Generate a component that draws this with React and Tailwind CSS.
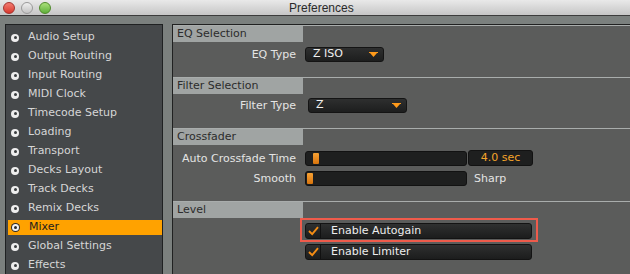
import React from 'react';

const font = "font-['DejaVu_Sans',sans-serif]";

const navItems = [
  'Audio Setup',
  'Output Routing',
  'Input Routing',
  'MIDI Clock',
  'Timecode Setup',
  'Loading',
  'Transport',
  'Decks Layout',
  'Track Decks',
  'Remix Decks',
  'Mixer',
  'Global Settings',
  'Effects',
];

const Bullet = ({ active }) =>
  active ? (
    <span className="flex h-[9px] w-[9px] items-center justify-center rounded-full bg-[#2b2b2b]">
      <span className="flex h-[7px] w-[7px] items-center justify-center rounded-full bg-[#f2f2f2]">
        <span className="h-[3px] w-[3px] rounded-full bg-[#2b2b2b]" />
      </span>
    </span>
  ) : (
    <span className="flex h-[8px] w-[8px] items-center justify-center rounded-full bg-[#eeeeee]">
      <span className="h-[3px] w-[3px] rounded-full bg-[#3a3d3f]" />
    </span>
  );

const SectionHeader = ({ title }) => (
  <div className="border-t border-[#a9adac]">
    <div className="flex h-[16px] w-[130px] items-center bg-[#a0a4a3] pl-[4px] text-[11px] text-[#2c2c2c]">
      {title}
    </div>
  </div>
);

const Label = ({ children }) => (
  <div className="w-[124px] shrink-0 pr-[1px] text-right text-[11px] leading-[15px] text-[#e4e4e4]">{children}</div>
);

const Dropdown = ({ value, width, ml }) => (
  <div
    className={`flex h-[15px] items-center justify-between rounded-[3px] border border-[#141414] bg-gradient-to-b from-[#2e2f2f] to-[#1d1e1e] pl-[7px] pr-[5px] text-[11px] text-[#f0f0f0] ${width} ${ml}`}
  >
    <span>{value}</span>
    <svg width="9" height="5" viewBox="0 0 9 5">
      <path d="M0 0 H9 V1 H8 L4.5 5 L1 1 H0 Z" fill="#ff9a1a" />
    </svg>
  </div>
);

const Slider = ({ pos }) => (
  <div className="relative ml-[8px] h-[15px] w-[162px] rounded-[3px] border border-[#121212] bg-[#1e1f1f]">
    <div
      className="absolute top-[1px] h-[11px] w-[6px] rounded-[1px] bg-gradient-to-b from-[#f7a233] to-[#d8740a]"
      style={{ left: pos }}
    />
  </div>
);

const Check = ({ label }) => (
  <div className="flex h-[16px] w-[227px] items-center rounded-[3px] border border-[#131313] bg-gradient-to-b from-[#2f3030] to-[#1c1d1d] text-[11px] leading-[14px] text-[#eeeeee]">
    <div className="flex h-full w-[15px] items-center justify-center border-r border-[#111111]">
      <svg width="11" height="10" viewBox="0 0 11 10">
        <path d="M1 5 L4.2 8.2 L10 1.2" fill="none" stroke="#f58d14" strokeWidth="1.9" />
      </svg>
    </div>
    <span className="pl-[10px]">{label}</span>
  </div>
);

export default function App() {
  return (
    <div className={`flex h-[274px] w-[630px] flex-col overflow-hidden bg-[#7b807e] ${font}`}>
      {/* title bar */}
      <div className="relative flex h-[16px] shrink-0 items-center border-b border-[#3c3c3c] bg-gradient-to-b from-[#e9e9e9] to-[#c6c6c6]">
        <div className="flex items-center gap-[6px] pl-[3px]">
          <span className="h-[12px] w-[12px] rounded-full border border-[#a3342f] bg-gradient-to-b from-[#f27a70] to-[#d9352b]" />
          <span className="h-[12px] w-[12px] rounded-full border border-[#9a9a9a] bg-gradient-to-b from-[#efefef] to-[#c3c3c3]" />
          <span className="h-[12px] w-[12px] rounded-full border border-[#4f8a2a] bg-gradient-to-b from-[#a9e07a] to-[#5eb03a]" />
        </div>
        <div className="ml-[238px] font-['Liberation_Sans',sans-serif] text-[12px] text-[#2a2a2a]">Preferences</div>
      </div>

      <div className="flex flex-1 pl-[5px] pt-[8px]">
        {/* sidebar */}
        <div className="w-[158px] shrink-0 border border-[#1f2122] bg-[#45484a] pt-[3px]">
          {navItems.map((item) => {
            const active = item === 'Mixer';
            return (
              <div key={item} className="flex h-[19px] items-center pl-[2px]">
                <div
                  className={`flex h-[15px] flex-1 items-center gap-[9px] pl-[3px] text-[11px] ${
                    active ? 'bg-[#ffa200] text-[#1e1e1e]' : 'text-[#d6d6d6]'
                  }`}
                >
                  <Bullet active={active} />
                  <span>{item}</span>
                </div>
              </div>
            );
          })}
        </div>

        {/* main panel */}
        <div className="ml-[9px] flex-1 border-l border-t border-[#202121] bg-[#5b5c5b]">
          <SectionHeader title="EQ Selection" />
          <div className="flex items-center pb-[15px] pt-[5px]">
            <Label>EQ Type</Label>
            <Dropdown value="Z ISO" width="w-[79px]" ml="ml-[8px]" />
          </div>

          <SectionHeader title="Filter Selection" />
          <div className="flex items-center pb-[15px] pt-[4px]">
            <Label>Filter Type</Label>
            <Dropdown value="Z" width="w-[99px]" ml="ml-[11px]" />
          </div>

          <SectionHeader title="Crossfader" />
          <div className="flex flex-col gap-[5px] pb-[15px] pt-[5px]">
            <div className="flex items-center">
              <Label>Auto Crossfade Time</Label>
              <Slider pos={7} />
              <div className="ml-[1px] flex h-[16px] w-[65px] items-center justify-center rounded-[3px] border border-[#121212] bg-[#1e1f1f] text-[11px] leading-[14px] text-[#f5a42a]">
                4.0 sec
              </div>
            </div>
            <div className="flex items-center">
              <Label>Smooth</Label>
              <Slider pos={1} />
              <span className="ml-[7px] text-[11px] leading-[15px] text-[#e4e4e4]">Sharp</span>
            </div>
          </div>

          <SectionHeader title="Level" />
          <div className="flex flex-col gap-[2px]">
            <div className="ml-[127px] w-[238px] border-2 border-[#ef5b4b] pb-[1px] pl-[3px] pt-[3px]">
              <Check label="Enable Autogain" />
            </div>
            <div className="ml-[132px]">
              <Check label="Enable Limiter" />
            </div>
          </div>
        </div>
      </div>
    </div>
  );
}
